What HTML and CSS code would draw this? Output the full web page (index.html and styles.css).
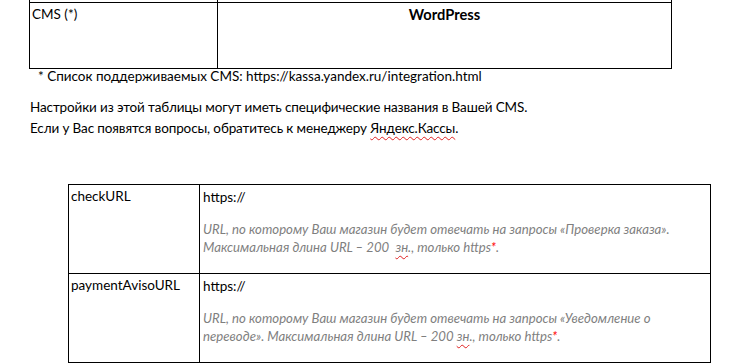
FILE: index.html
```html
<!DOCTYPE html>
<html lang="ru">
<head>
<meta charset="utf-8">
<title>Настройки</title>
<link rel="stylesheet" href="styles.css">
</head>
<body>
<div class="page">
  <table class="t1">
    <colgroup><col class="t1-c1"><col class="t1-c2"></colgroup>
    <tr class="t1-prev"><td></td><td></td></tr>
    <tr class="t1-row">
      <td class="cell-left">CMS (*)</td>
      <td class="cell-center"><b>WordPress</b></td>
    </tr>
  </table>
  <p class="footnote">* Список поддерживаемых CMS: https://kassa.yandex.ru/integration.html</p>
  <p class="para">Настройки из этой таблицы могут иметь специфические названия в Вашей CMS.<br>Если у Вас появятся вопросы, обратитесь к менеджеру <span class="spell">Яндекс.Кассы</span>.</p>
  <table class="t2">
    <colgroup><col class="t2-c1"><col class="t2-c2"></colgroup>
    <tr class="t2-row">
      <td class="name">checkURL</td>
      <td class="val">
        <div class="url">https://</div>
        <div class="hint">URL, по которому Ваш магазин будет отвечать на запросы «Проверка заказа».<br>Максимальная длина URL – 200&nbsp; <span class="spell">зн</span>., только https<span class="red">*</span>.</div>
      </td>
    </tr>
    <tr class="t2-row">
      <td class="name">paymentAvisoURL</td>
      <td class="val">
        <div class="url">https://</div>
        <div class="hint">URL, по которому Ваш магазин будет отвечать на запросы «Уведомление о<br>переводе». Максимальная длина URL – 200 <span class="spell">зн</span>., только https<span class="red">*</span>.</div>
      </td>
    </tr>
    <tr class="t2-row">
      <td class="name"></td>
      <td class="val"></td>
    </tr>
  </table>
</div>
</body>
</html>
```
FILE: styles.css
```css
html, body {
  margin: 0;
  padding: 0;
  background: #fff;
}
body {
  width: 732px;
  height: 363px;
  overflow: hidden;
  font-family: Lato, "Open Sans", sans-serif;
  font-size: 13.5px;
  color: #000;
}
.page {
  display: flex;
  flex-direction: column;
}
table {
  border-collapse: collapse;
  table-layout: fixed;
}
td {
  border: 1px solid #000;
  vertical-align: top;
  padding: 0;
}
.t1 {
  margin-left: 29px;
  margin-top: -18px;
  width: 642px;
}
.t1-c1 { width: 188px; }
.t1-c2 { width: 454px; }
.t1-prev td { height: 19px; }
.t1-row td { height: 62px; }
.cell-left {
  padding: 3px 0 0 2px;
}
.cell-center {
  text-align: center;
  padding-top: 3px;
}
.cell-center b {
  font-size: 14.67px;
}
.footnote {
  margin: -3px 0 0 38px;
  line-height: 20px;
}
.para {
  margin: 11px 0 0 30px;
  line-height: 21px;
  letter-spacing: -0.12px;
}
.spell {
  text-decoration: underline wavy #e02020;
  text-decoration-thickness: 1px;
  text-underline-offset: 3px;
}
.t2 {
  margin-left: 68px;
  margin-top: 45px;
  width: 642px;
}
.t2-c1 { width: 131px; }
.t2-c2 { width: 511px; }
.t2-row td { height: 85px; }
.name {
  padding: 3px 0 0 2px;
}
.val {
  padding: 3px 0 0 3px;
}
.url {
  line-height: 18px;
}
.hint {
  margin-top: 14px;
  font-style: italic;
  font-size: 13.2px;
  color: #7f7f7f;
  line-height: 18px;
}
.red { color: #ff0000; }
```
